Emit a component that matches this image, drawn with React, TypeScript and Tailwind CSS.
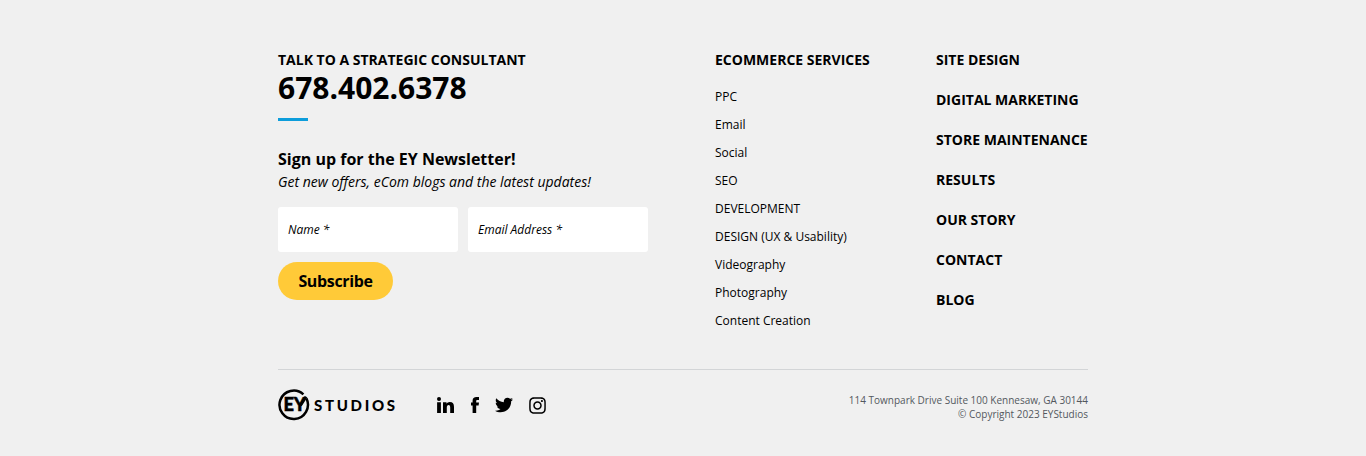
import React from "react";
import { FaTwitter, FaInstagram } from "react-icons/fa";

const services = [
  "PPC",
  "Email",
  "Social",
  "SEO",
  "DEVELOPMENT",
  "DESIGN (UX & Usability)",
  "Videography",
  "Photography",
  "Content Creation",
];

const links = [
  "SITE DESIGN",
  "DIGITAL MARKETING",
  "STORE MAINTENANCE",
  "RESULTS",
  "OUR STORY",
  "CONTACT",
  "BLOG",
];

function Logo() {
  return (
    <a href="#" className="flex h-8 w-[119px] items-center">
      <svg width="32" height="32" viewBox="0 0 32 32" className="shrink-0" aria-label="EY">
        <path
          d="M25.4 5.4 A14.2 14.2 0 1 0 28.4 9.4"
          fill="none"
          stroke="#000"
          strokeWidth="2.5"
        />
        <path d="M22.4 16.5 L28 7.8" stroke="#000" strokeWidth="3" />
        <text
          x="5.4"
          y="22.3"
          textLength="22.5"
          lengthAdjust="spacingAndGlyphs"
          fontFamily="Lato, sans-serif"
          fontWeight="900"
          fontSize="19"
          stroke="#000"
          strokeWidth="0.5"
        >
          EY
        </text>
      </svg>
      <span className="ml-1 font-['Lato',sans-serif] text-[15px] font-black leading-none tracking-[2.7px]">
        STUDIOS
      </span>
    </a>
  );
}

function LinkedIn() {
  return (
    <svg width="17" height="16" viewBox="0 0 17 16">
      <circle cx="2" cy="2" r="2" />
      <path d="M.1 5.3h3.8V16H.1zM6 5.3h3.5v1.5c.7-1.1 1.8-1.8 3.3-1.8 3 0 4.2 1.8 4.2 5v6h-3.8v-5.3c0-1.7-.4-2.6-1.5-2.6-1.3 0-1.9.9-1.9 2.7V16H6z" />
    </svg>
  );
}

function Facebook() {
  return (
    <svg width="8" height="16" viewBox="0 0 8 16">
      <path d="M1.6 16V8.4H0V5.4h1.6V3.7C1.6 1.3 3 0 5.5 0H8v2.9H6.5c-1 0-1.3.4-1.3 1.2v1.3H8l-.4 3H5.2V16z" />
    </svg>
  );
}

export default function App() {
  return (
    <footer className="h-[456px] bg-[#f0f0f0] pt-[50px] font-['Open_Sans',sans-serif] text-black">
      <div className="mx-auto w-[810px]">
        <div className="flex h-[319px]">
          <section className="w-[437px]">
            <p className="text-[14px] font-bold leading-5">TALK TO A STRATEGIC CONSULTANT</p>
            <p className="text-[30px] font-bold leading-9">678.402.6378</p>
            <div className="mt-[12px] h-[3px] w-[30px] bg-[#0d9ddb]" />
            <h2 className="mt-[26px] text-[16px] font-bold leading-6">Sign up for the EY Newsletter!</h2>
            <p className="text-[14px] italic leading-[22px]">
              Get new offers, eCom blogs and the latest updates!
            </p>
            <form>
              <div className="mt-[13.5px] flex gap-[10px]">
                <input
                  placeholder="Name *"
                  className="h-[45px] w-[180px] rounded-[3px] bg-white px-[10px] text-[12px] italic placeholder:text-black"
                />
                <input
                  placeholder="Email Address *"
                  className="h-[45px] w-[180px] rounded-[3px] bg-white px-[10px] text-[12px] italic placeholder:text-black"
                />
              </div>
              <button
                type="button"
                className="mt-[10px] h-[38px] w-[115px] rounded-full bg-[#ffca38] text-[16px] font-bold tracking-[-0.35px]"
              >
                Subscribe
              </button>
            </form>
          </section>
          <section className="w-[221px]">
            <h3 className="text-[14px] font-bold leading-5">ECOMMERCE SERVICES</h3>
            <ul className="mt-[13px]">
              {services.map((item) => (
                <li key={item} className="text-[12px] leading-7">
                  {item}
                </li>
              ))}
            </ul>
          </section>
          <ul className="flex flex-col gap-5 whitespace-nowrap">
            {links.map((item) => (
              <li key={item} className="text-[14px] font-bold leading-5">
                {item}
              </li>
            ))}
          </ul>
        </div>
        <div className="flex border-t border-[#d3d5d7] pt-[19px]">
          <Logo />
          <div className="ml-10 flex h-8 items-center">
            <LinkedIn />
            <div className="ml-[17px]">
              <Facebook />
            </div>
            <FaTwitter size={18} className="ml-4" />
            <FaInstagram size={19} className="ml-[15px]" />
          </div>
          <p className="ml-auto mt-1 text-right text-[10px] leading-[14px] text-[#53585e]">
            114 Townpark Drive Suite 100 Kennesaw, GA 30144
            <br />© Copyright 2023 EYStudios
          </p>
        </div>
      </div>
    </footer>
  );
}
